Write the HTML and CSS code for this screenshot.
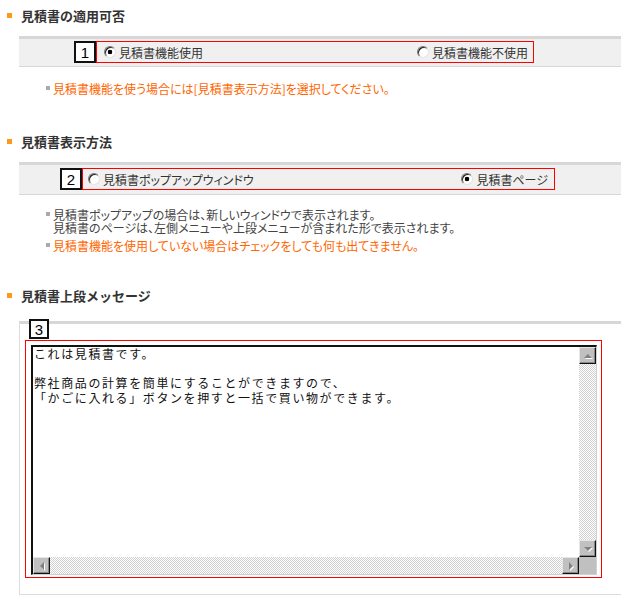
FILE: index.html
```html
<!DOCTYPE html>
<html lang="ja">
<head>
    <meta charset="UTF-8">
    <title>見積書設定</title>
    <link rel="stylesheet" href="styles.css">
</head>
<body>
    <div class="page">
        <!-- 見積書の適用可否 -->
        <section class="setting">
            <h2 class="setting-title">見積書の適用可否</h2>
            <div class="option-bar option-bar--apply">
                <span class="num-badge">1</span>
                <div class="choice-box choice-box--apply">
                    <label class="choice"><input type="radio" name="apply" checked>見積書機能使用</label>
                    <label class="choice"><input type="radio" name="apply">見積書機能不使用</label>
                </div>
            </div>
            <ul class="notes notes--apply">
                <li class="note-warn">見積書機能を使う場合には[見積書表示方法]を選択してください。</li>
            </ul>
        </section>

        <!-- 見積書表示方法 -->
        <section class="setting">
            <h2 class="setting-title">見積書表示方法</h2>
            <div class="option-bar option-bar--display">
                <span class="num-badge">2</span>
                <div class="choice-box choice-box--display">
                    <label class="choice"><input type="radio" name="display">見積書ポップアップウィンドウ</label>
                    <label class="choice"><input type="radio" name="display" checked>見積書ページ</label>
                </div>
            </div>
            <ul class="notes notes--display">
                <li>見積書ポップアップの場合は、新しいウィンドウで表示されます。<br>見積書のページは、左側メニューや上段メニューが含まれた形で表示されます。</li>
                <li class="note-warn">見積書機能を使用していない場合はチェックをしても何も出てきません。</li>
            </ul>
        </section>

        <!-- 見積書上段メッセージ -->
        <section class="setting setting--message">
            <h2 class="setting-title">見積書上段メッセージ</h2>
            <div class="message-panel">
                <span class="num-badge num-badge--small">3</span>
                <div class="message-box">
                    <div class="memo-field">
                        <textarea class="memo-text" spellcheck="false">これは見積書です。

弊社商品の計算を簡単にすることができますので、
「かごに入れる」ボタンを押すと一括で買い物ができます。</textarea>
                        <div class="vscroll">
                            <span class="sb-btn sb-up"></span>
                            <span class="sb-track"></span>
                            <span class="sb-btn sb-down"></span>
                        </div>
                        <div class="hscroll">
                            <span class="sb-btn sb-left"></span>
                            <span class="sb-track"></span>
                            <span class="sb-btn sb-right"></span>
                        </div>
                        <span class="sb-corner"></span>
                    </div>
                </div>
            </div>
        </section>
    </div>
</body>
</html>
```

FILE: styles.css
```css
/* Base */
body {
    margin: 0;
    font-family: "Noto Sans CJK JP", "Liberation Sans", sans-serif;
    font-size: 12px;
    color: #333;
    background: #fff;
    overflow: hidden;
}

.page {
    padding-top: 5px;
}

/* Section titles */
.setting + .setting {
    margin-top: 36px;
}

.setting-title {
    display: flex;
    align-items: center;
    margin: 0;
    padding-left: 7px;
    height: 20px;
    font-size: 13px;
    font-weight: bold;
    color: #333;
}

.setting-title::before {
    content: "";
    width: 5px;
    height: 5px;
    margin-right: 9px;
    background: #fb9a1a;
}

/* Gray option bar */
.option-bar {
    display: flex;
    margin: 11px 0 0 19px;
    background: #f0f0f0;
    border-top: 3px solid #d7d7d7;
    border-bottom: 1px solid #d7d7d7;
}

.option-bar--apply {
    padding: 2px 0 3px 55px;
}

.option-bar--display {
    padding: 3px 0 4px 41px;
}

.num-badge {
    display: flex;
    align-items: center;
    justify-content: center;
    box-sizing: border-box;
    width: 22px;
    height: 22px;
    border: 2px solid #111;
    background: #fff;
    font-family: "Liberation Sans", sans-serif;
    font-size: 15px;
    color: #000;
}

.choice-box {
    display: flex;
    align-items: center;
    justify-content: space-between;
    box-sizing: border-box;
    height: 22px;
    border: 1px solid #f00;
    padding: 0 5px 0 7px;
}

.choice-box--apply {
    width: 438px;
}

.choice-box--display {
    width: 473px;
    padding: 0 6px 0 5px;
}

.choice {
    display: flex;
    align-items: center;
    gap: 3px;
    font-feature-settings: "palt";
    color: #333;
    cursor: pointer;
}

.choice input {
    appearance: none;
    -webkit-appearance: none;
    margin: 0;
    width: 12px;
    height: 12px;
    border-radius: 50%;
    border: 1px solid;
    border-color: #777 #e4e4e4 #e4e4e4 #777;
    box-shadow: inset 1px 1px 0 #222;
    background: #fff;
}

.choice input:checked {
    background: radial-gradient(circle, #000 0 2px, #fff 2.6px);
}

/* Notes */
.notes {
    list-style: none;
    margin: 15px 0 0 46px;
    padding: 0;
    font-feature-settings: "palt";
}

.notes--display {
    margin-top: 13px;
}

.notes li {
    position: relative;
    padding-left: 7px;
    line-height: 13px;
    color: #444;
}

.notes li + li {
    margin-top: 5px;
}

.notes li::before {
    content: "";
    position: absolute;
    left: 0;
    top: 4px;
    width: 4px;
    height: 4px;
    background: #aaa;
}

.notes .note-warn {
    color: #f60;
}

/* Message panel */
.setting--message {
    margin-top: 33px !important;
}

.message-panel {
    display: flex;
    flex-direction: column;
    align-items: flex-start;
    margin: 16px 0 0 19px;
    padding-bottom: 16px;
    border-top: 3px solid #d7d7d7;
    border-left: 1px solid #ddd;
    border-bottom: 1px solid #ddd;
}

.num-badge--small {
    width: 20px;
    height: 20px;
    margin: -5px 0 0 9px;
}

.message-box {
    box-sizing: border-box;
    width: 577px;
    margin: 1px 0 0 5px;
    padding: 4px 3px 2px 5px;
    border: 1px solid #f00;
}

.memo-field {
    display: grid;
    grid-template-columns: 1fr 17px;
    grid-template-rows: 1fr 17px;
    box-sizing: border-box;
    width: 566px;
    height: 230px;
    border-style: solid;
    border-width: 2px 1px 1px 2px;
    border-color: #111 #d0d0d0 #d0d0d0 #111;
}

.memo-text {
    margin: 0;
    padding: 0 0 0 1px;
    border: none;
    outline: none;
    resize: none;
    overflow: hidden;
    font-family: "Noto Sans CJK JP", monospace;
    font-size: 12px;
    letter-spacing: 1.6px;
    line-height: 14.5px;
    color: #111;
    background: #fff;
}

/* Classic scrollbars */
.vscroll,
.hscroll {
    display: flex;
}

.vscroll {
    flex-direction: column;
}

.sb-track {
    flex: 1;
    background-image: conic-gradient(#d0d0d0 25%, #fff 0 50%, #d0d0d0 0 75%, #fff 0);
    background-size: 2px 2px;
}

.sb-btn {
    display: flex;
    align-items: center;
    justify-content: center;
    box-sizing: border-box;
    width: 17px;
    height: 17px;
    background: #c0c0c0;
    border: 1px solid;
    border-color: #e6e6e6 #111 #111 #e6e6e6;
    box-shadow: inset -1px -1px 0 #888;
}

.sb-btn::before {
    content: "";
    width: 0;
    height: 0;
    border: 4px solid transparent;
    filter: drop-shadow(1px 1px 0 #fff);
}

.sb-up::before {
    border-top-width: 0;
    border-bottom-color: #808080;
}

.sb-down::before {
    border-bottom-width: 0;
    border-top-color: #808080;
}

.sb-left::before {
    border-left-width: 0;
    border-right-color: #808080;
}

.sb-right::before {
    border-right-width: 0;
    border-left-color: #808080;
}

.sb-corner {
    background: #c0c0c0;
}
```
